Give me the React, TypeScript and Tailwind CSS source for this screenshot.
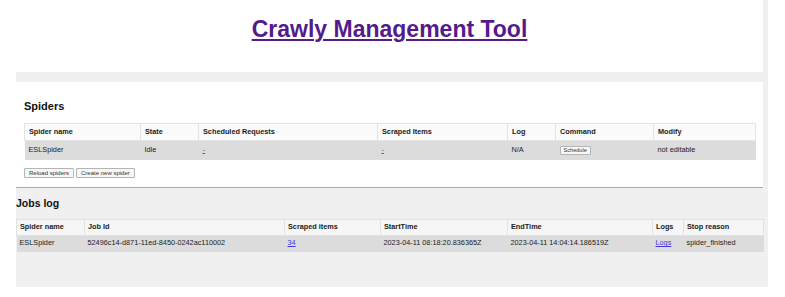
import React from "react";

const spiderCols = [116, 58, 179, 130, 48, 98, 102];
const jobCols = [68, 200, 96, 127, 145, 31, 80];

export default function App() {
  return (
    <div className="min-h-[297px] bg-white font-['Liberation_Sans',Arial,sans-serif] text-[#222]">
      <div className="ml-4 w-[752px] h-[287px] bg-[#f0f0f0] flex flex-col">
        <div className="mr-[5px] h-[72px] bg-white flex justify-center pt-[18px]">
          <a className="text-[23px] leading-[23px] font-bold text-[#551A8B] underline decoration-[2px] underline-offset-[2px] cursor-pointer">
            Crawly Management Tool
          </a>
        </div>
        <div className="h-[10px]" />
        <div className="mr-[5px] bg-white border-b border-[#a9a9a9] px-2 pt-[18px] pb-[9px] flex flex-col">
          <h2 className="text-[11px] leading-[13px] font-bold text-[#111] mb-[10px]">Spiders</h2>
          <table className="table-fixed border-collapse w-[731px] text-[7.3px]">
            <colgroup>
              {spiderCols.map((w, i) => (
                <col key={i} style={{ width: w }} />
              ))}
            </colgroup>
            <thead>
              <tr className="h-[17px] bg-[#fbfbfb]">
                {["Spider name", "State", "Scheduled Requests", "Scraped Items", "Log", "Command", "Modify"].map((h) => (
                  <th key={h} className="text-left font-bold px-1 py-0 border border-[#e4e4e4] text-[#1a1a1a]">
                    {h}
                  </th>
                ))}
              </tr>
            </thead>
            <tbody>
              <tr className="h-[19px] bg-[#dcdcdc]">
                <td className="px-1">ESLSpider</td>
                <td className="px-1">Idle</td>
                <td className="px-1">
                  <a className="text-[#5b4fd0] underline cursor-pointer">-</a>
                </td>
                <td className="px-1">
                  <a className="text-[#5b4fd0] underline cursor-pointer">-</a>
                </td>
                <td className="px-1">N/A</td>
                <td className="px-1">
                  <button className="h-[9px] px-[3px] text-[5.6px] leading-[7px] bg-[#f7f7f7] border border-[#b5b5b5] rounded-[1px] text-[#333] flex items-center">
                    Schedule
                  </button>
                </td>
                <td className="px-1">not editable</td>
              </tr>
            </tbody>
          </table>
          <div className="flex gap-[2px] mt-[8px]">
            <button className="h-[10px] px-[4px] text-[6px] leading-[8px] bg-[#f7f7f7] border border-[#b5b5b5] rounded-[1px] text-[#333] flex items-center">
              Reload spiders
            </button>
            <button className="h-[10px] px-[4px] text-[6px] leading-[8px] bg-[#f7f7f7] border border-[#b5b5b5] rounded-[1px] text-[#333] flex items-center">
              Create new spider
            </button>
          </div>
        </div>
        <div className="mr-[5px] pt-[9px] flex flex-col">
          <h2 className="text-[10.5px] leading-[13px] font-bold text-[#111] mb-[9px]">Jobs log</h2>
          <table className="table-fixed border-collapse w-[747px] text-[7.3px]">
            <colgroup>
              {jobCols.map((w, i) => (
                <col key={i} style={{ width: w }} />
              ))}
            </colgroup>
            <thead>
              <tr className="h-[16px] bg-[#f6f6f6]">
                {["Spider name", "Job Id", "Scraped items", "StartTime", "EndTime", "Logs", "Stop reason"].map((h) => (
                  <th key={h} className="text-left font-bold px-[3px] py-0 border border-[#e2e2e2] text-[#1a1a1a]">
                    {h}
                  </th>
                ))}
              </tr>
            </thead>
            <tbody>
              <tr className="h-[17px] bg-[#dcdcdc]">
                <td className="px-[3px]">ESLSpider</td>
                <td className="px-[3px]">52496c14-d871-11ed-8450-0242ac110002</td>
                <td className="px-[3px]">
                  <a className="text-[#3b3be0] underline cursor-pointer">34</a>
                </td>
                <td className="px-[3px]">2023-04-11 08:18:20.836365Z</td>
                <td className="px-[3px]">2023-04-11 14:04:14.186519Z</td>
                <td className="px-[3px]">
                  <a className="text-[#3b3be0] underline cursor-pointer">Logs</a>
                </td>
                <td className="px-[3px]">spider_finished</td>
              </tr>
            </tbody>
          </table>
        </div>
      </div>
    </div>
  );
}
